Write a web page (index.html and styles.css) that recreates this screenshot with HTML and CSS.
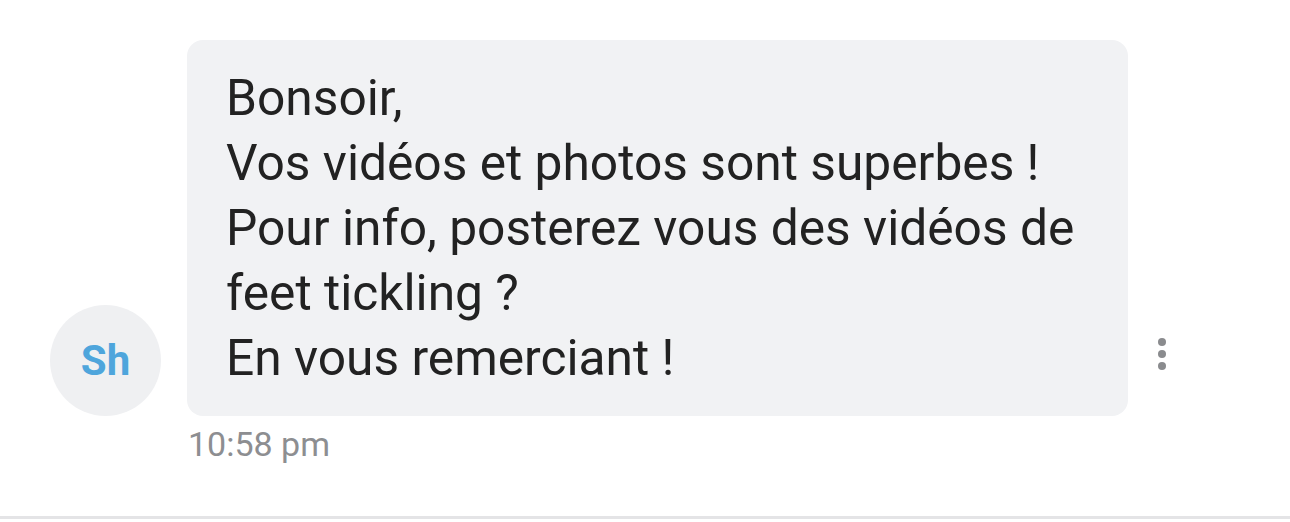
FILE: index.html
```html
<!DOCTYPE html>
<html lang="fr">
<head>
  <meta charset="UTF-8">
  <meta name="viewport" content="width=device-width, initial-scale=1.0">
  <title>Message</title>
  <link rel="stylesheet" href="styles.css">
</head>
<body>

<div class="thread">
  <div class="message">
    <div class="avatar">Sh</div>

    <div class="content">
      <div class="bubble">
        <p>Bonsoir,</p>
        <p>Vos vidéos et photos sont superbes !</p>
        <p>Pour info, posterez vous des vidéos de feet tickling ?</p>
        <p>En vous remerciant !</p>
      </div>
      <div class="time">10:58 pm</div>
    </div>

    <div class="more">
      <span class="dot"></span>
      <span class="dot"></span>
      <span class="dot"></span>
    </div>
  </div>
</div>

</body>
</html>
```

FILE: styles.css
```css
body {
  margin: 0;
  background-color: #ffffff;
  font-family: Roboto, "Noto Sans", sans-serif;
}

.thread {
  height: 519px;
  border-bottom: 3px solid #e4e4e6;
  box-sizing: border-box;
  padding: 40px 0 0 50px;
}

.message {
  display: flex;
  align-items: flex-start;
}

.avatar {
  flex: none;
  width: 111px;
  height: 111px;
  border-radius: 50%;
  background-color: #eff0f2;
  color: #4ea5dc;
  font-size: 42px;
  font-weight: 700;
  display: flex;
  align-items: center;
  justify-content: center;
  margin-top: 265px;
}

.content {
  margin-left: 26px;
}

.bubble {
  width: 941px;
  box-sizing: border-box;
  background-color: #f1f2f4;
  border-radius: 16px;
  padding: 26px 48px 25px 39px;
  color: #222222;
  font-size: 49.7px;
  line-height: 65px;
}

.bubble p {
  margin: 0;
}

.time {
  margin: 8px 0 0 1px;
  color: #8d8e91;
  font-size: 34px;
  line-height: 40px;
}

.more {
  display: flex;
  flex-direction: column;
  gap: 4px;
  margin: 298px 0 0 30px;
}

.dot {
  width: 8px;
  height: 8px;
  border-radius: 50%;
  background-color: #8a8b8e;
}
```
